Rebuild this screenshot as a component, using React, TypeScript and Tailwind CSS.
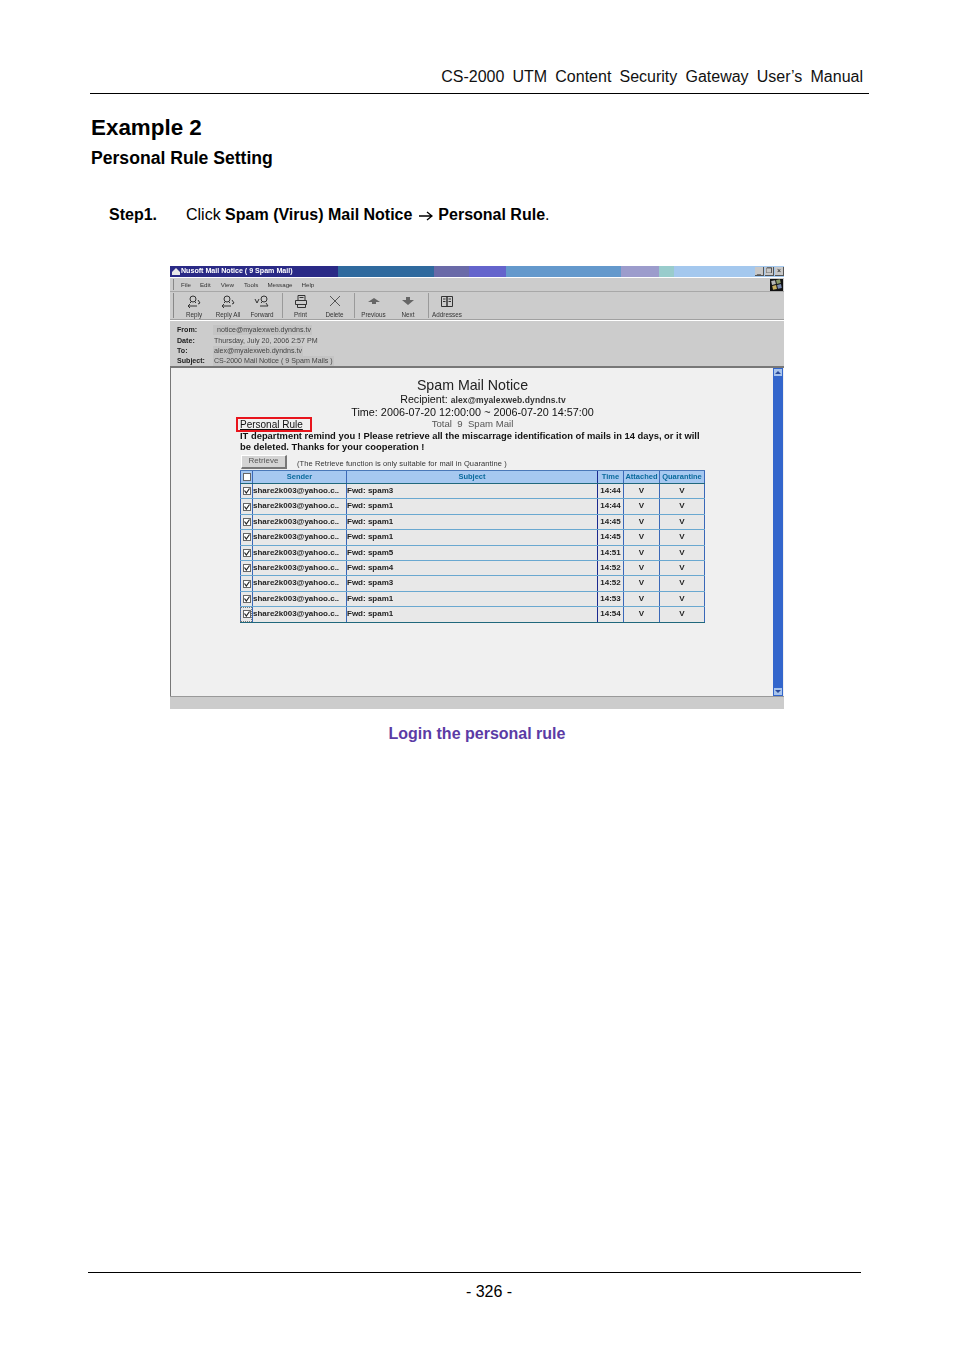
const titleSegments = [
  { w: 'w-[168px]', c: 'bg-[#2a2a86]' },
  { w: 'w-[96px]', c: 'bg-[#2f6a9e]' },
  { w: 'w-[35px]', c: 'bg-[#6a6aa8]' },
  { w: 'w-[37px]', c: 'bg-[#6464cc]' },
  { w: 'w-[115px]', c: 'bg-[#6499cc]' },
  { w: 'w-[38px]', c: 'bg-[#9c9ccc]' },
  { w: 'w-[15px]', c: 'bg-[#99cccc]' },
  { w: 'flex-1', c: 'bg-[#a4c8ee]' },
]

const menus = [
  { label: 'File', gap: 'mr-[9px]' },
  { label: 'Edit', gap: 'mr-[10px]' },
  { label: 'View', gap: 'mr-[10px]' },
  { label: 'Tools', gap: 'mr-[9px]' },
  { label: 'Message', gap: 'mr-[9px]' },
  { label: 'Help', gap: '' },
]

const rows = [
  ['spam3', '14:44'],
  ['spam1', '14:44'],
  ['spam1', '14:45'],
  ['spam1', '14:45'],
  ['spam5', '14:51'],
  ['spam4', '14:52'],
  ['spam3', '14:52'],
  ['spam1', '14:53'],
  ['spam1', '14:54'],
]

const headerFields = [
  ['From:', 'notice@myalexweb.dyndns.tv'],
  ['Date:', 'Thursday, July 20, 2006 2:57 PM'],
  ['To:', 'alex@myalexweb.dyndns.tv'],
  ['Subject:', 'CS-2000 Mail Notice ( 9 Spam Mails )'],
]

const gridCols = 'grid grid-cols-[12px_94px_251px_26px_36px_46px]'

function ToolIcon({ kind }: { kind: string }) {
  const s = { fill: 'none', stroke: '#333', strokeWidth: 1 }
  return (
    <svg width="16" height="13" viewBox="0 0 16 13" className="block">
      {kind === 'reply' && (
        <g {...s}>
          <circle cx="7" cy="4" r="3" />
          <path d="M5 7l-1 1M9 7l1 1M2 11h9M4 9l-2 2 2 2M12 5l2 3-2 1" />
        </g>
      )}
      {kind === 'forward' && (
        <g {...s}>
          <circle cx="10" cy="4" r="3" />
          <path d="M8 7l-1 1M6 11h8M1 4l2 4 2-4M12 8l2 3" />
        </g>
      )}
      {kind === 'print' && (
        <g {...s}>
          <path d="M5 0.5h7v5H5zM2.5 5.5h11v4h-11zM4.500 9.500h8v3h-8zM6.500 2.500h4" />
        </g>
      )}
      {kind === 'delete' && <path d="M3 1l10 10M13 1L3 11" fill="none" stroke="#555" strokeWidth={1} />}
      {kind === 'prev' && <path d="M8 3l6 4h-4v2H6V7H2z" fill="#666" />}
      {kind === 'next' && <path d="M6 2h4v3h4l-6 5-6-5h4z" fill="#666" />}
      {kind === 'book' && (
        <g {...s}>
          <path d="M2.500 1.500h5.500v10H2.500zM8 1.500h5.500v10H8zM4 4h2.500M4 6.500h2.500M9.500 4H12M9.500 6.500H12" />
        </g>
      )}
    </svg>
  )
}

function ToolButton({ label, kind, w }: { label: string; kind: string; w: string }) {
  return (
    <div className={`${w} flex flex-col items-center pt-[2px]`}>
      <div className="h-[14px] flex items-center">
        <ToolIcon kind={kind} />
      </div>
      <div className="mt-[3px] text-[6.3px] leading-[8px] text-[#333] whitespace-nowrap">{label}</div>
    </div>
  )
}

function ToolSep() {
  return <div className="w-px h-[25px] bg-[#9a9a9a] shrink-0" />
}

function CheckBox({ checked }: { checked?: boolean }) {
  return (
    <div className="w-[8px] h-[8px] border border-[#666] bg-white flex items-center justify-center">
      {checked && (
        <svg width="6" height="6" viewBox="0 0 6 6">
          <path d="M0.500 2.500l1.800 2.500 3.200-4.500" fill="none" stroke="#222" strokeWidth={1.2} />
        </svg>
      )}
    </div>
  )
}

function WinFlag() {
  return (
    <div className="w-[13px] h-[12px] bg-[#111] flex items-center justify-center mr-[1px]">
      <div className="grid grid-cols-2 gap-px -rotate-12">
        <div className="w-[4px] h-[4px] bg-[#b8b8b8]" />
        <div className="w-[4px] h-[4px] bg-[#8a9a6a]" />
        <div className="w-[4px] h-[4px] bg-[#c8b060]" />
        <div className="w-[4px] h-[4px] bg-[#7a8ab0]" />
      </div>
    </div>
  )
}

function MailWindow() {
  return (
    <div className="ml-[170px] w-[614px] h-[443px] bg-[#cccccc] flex flex-col blur-[0.3px]">
      {/* title bar */}
      <div className="h-[11px] flex relative shrink-0">
        {titleSegments.map((s, i) => (
          <div key={i} className={`${s.w} ${s.c}`} />
        ))}
        <div className="absolute left-[2px] top-0 h-[11px] flex items-center gap-[1px] text-white font-bold text-[7.1px] whitespace-nowrap">
          <svg width="8" height="7" viewBox="0 0 8 7">
            <path d="M0 4l4-4 4 4v3H0z" fill="#e8e8e8" />
          </svg>
          Nusoft Mail Notice ( 9 Spam Mail)
        </div>
        <div className="absolute right-0 top-[1px] flex gap-[1px]">
          {['_', '❐', '×'].map((c) => (
            <div key={c} className="w-[9px] h-[9px] bg-[#c8c8c8] border-r border-b border-[#555] text-[7px] leading-[8px] text-center text-[#111]">
              {c}
            </div>
          ))}
        </div>
      </div>
      <div className="h-px bg-white shrink-0" />
      {/* menu bar */}
      <div className="h-[14px] flex items-center justify-between border-b border-[#a8a8a8] shrink-0">
        <div className="flex items-center pl-[3px]">
          <div className="w-px h-[11px] bg-[#888] mr-[7px]" />
          {menus.map((m) => (
            <span key={m.label} className={`text-[6.2px] text-[#333] ${m.gap}`}>
              {m.label}
            </span>
          ))}
        </div>
        <WinFlag />
      </div>
      {/* toolbar */}
      <div className="h-[28px] flex items-center pl-[3px] border-b border-[#a0a0a0] shrink-0">
        <div className="w-px h-[25px] bg-[#888]" />
        <ToolButton label="Reply" kind="reply" w="w-[40px]" />
        <ToolButton label="Reply All" kind="reply" w="w-[28px]" />
        <ToolButton label="Forward" kind="forward" w="w-[40px]" />
        <ToolSep />
        <ToolButton label="Print" kind="print" w="w-[35px]" />
        <ToolButton label="Delete" kind="delete" w="w-[33px]" />
        <div className="w-[3px]" />
        <ToolSep />
        <ToolButton label="Previous" kind="prev" w="w-[37px]" />
        <ToolButton label="Next" kind="next" w="w-[32px]" />
        <div className="w-[4px]" />
        <ToolSep />
        <ToolButton label="Addresses" kind="book" w="w-[36px]" />
      </div>
      <div className="h-px bg-white shrink-0" />
      {/* mail header */}
      <div className="h-[46px] pt-[4px] pl-[7px] border-b border-[#777] shrink-0">
        {headerFields.map(([k, v], i) => (
          <div key={k} className="flex h-[10.4px] items-center text-[7.1px] leading-[10px]">
            <span className="w-[36px] font-bold text-[#222]">{k}</span>
            <span className={`text-[#444] px-[1px] ${i === 1 ? '' : 'bg-[#c4c4c4]'} ${i === 0 ? 'pl-[4px]' : ''}`}>{v}</span>
          </div>
        ))}
      </div>
      {/* mail body */}
      <div className="h-[329px] flex border-l border-t border-[#777] bg-[#f0f0f0] shrink-0">
        <div className="flex-1 pl-[69px] pt-[10px] text-black">
          <div className="w-[465px] flex flex-col items-center">
            <div className="text-[14.2px] leading-[15px] text-[#222]">Spam Mail Notice</div>
            <div className="text-[10.7px] leading-[13px] ml-[21px] text-[#111] flex items-baseline">
              Recipient:
              <span className="ml-[3px] font-bold text-[8.5px] tracking-[0.1px] text-[#333]">alex@myalexweb.dyndns.tv</span>
            </div>
            <div className="text-[10.8px] leading-[13px] mt-[-1px] text-[#111]">Time: 2006-07-20 12:00:00 ~ 2006-07-20 14:57:00</div>
          </div>
          <div className="w-[465px] h-[12px] mt-[-1px] relative flex justify-center">
            <div className="text-[9.6px] leading-[12px] text-[#555]">Total&nbsp; 9&nbsp; Spam Mail</div>
            <div className="absolute left-[-4px] top-[-1px] w-[76px] h-[15px] border-2 border-[#e8141c] text-[10px] leading-[11px] pl-[2px] text-[#111] underline whitespace-nowrap">
              Personal Rule
            </div>
          </div>
          <div className="w-[466px] text-[9.4px] leading-[11px] text-[#111] font-bold">
            IT department remind you ! Please retrieve all the miscarrage identification of mails in 14 days, or it will be deleted. Thanks for your cooperation !
          </div>
          <div className="flex items-center h-[14px] mt-[3px] pl-[1px]">
            <div className="w-[46px] h-[14px] bg-[#d4d4d4] border-r-2 border-b-2 border-[#777] border-t border-l border-t-white border-l-white text-[8px] leading-[10px] text-center text-[#555]">
              Retrieve
            </div>
            <div className="ml-[10px] mt-[3px] text-[7.5px] text-[#333] tracking-[0.1px] whitespace-nowrap">
              (The Retrieve function is only suitable for mail in Quarantine )
            </div>
          </div>
          {/* spam table */}
          <div className="w-[465px] mt-[1px] border-b border-[#20687c]">
            <div className={`${gridCols} h-[13px] bg-[#a6c8f0] border-t border-[#4a78b8] text-[#0a6a9c] font-bold text-[7.5px] leading-[12px] text-center`}>
              <div className="border-l border-[#3a68b8] flex items-center justify-center">
                <CheckBox />
              </div>
              <div className="border-l border-[#3a68b8]">Sender</div>
              <div className="border-l border-[#3a68b8]">Subject</div>
              <div className="border-l border-[#1a2a90]">Time</div>
              <div className="border-l border-[#3a68b8] whitespace-nowrap">Attached</div>
              <div className="border-l border-r border-[#3a68b8] whitespace-nowrap">Quarantine</div>
            </div>
            {rows.map(([subject, time], i) => (
              <div
                key={i}
                className={`${gridCols} h-[15.4px] bg-[#e8e8e8] border-t ${i === 0 ? 'border-[#20687c]' : 'border-[#6aa8d0]'} text-[8px] leading-[14px] text-[#222] font-bold`}
              >
                <div className={`border-l border-[#3a68b8] flex items-center justify-center ${i === 8 ? 'outline-1 outline-dotted outline-[#777] -outline-offset-1' : ''}`}>
                  <CheckBox checked />
                </div>
                <div className="border-l border-[#3a68b8] whitespace-nowrap">share2k003@yahoo.c..</div>
                <div className="border-l border-[#3a68b8]">Fwd: {subject}</div>
                <div className="border-l border-[#1a2a90] text-center">{time}</div>
                <div className="border-l border-[#3a68b8] text-center">V</div>
                <div className="border-l border-r border-[#3a68b8] text-center">V</div>
              </div>
            ))}
          </div>
        </div>
        {/* scrollbar */}
        <div className="w-[10px] flex flex-col justify-between bg-[#3366cc] mr-px">
          <div className="h-[9px] bg-[#a8c4ec] border border-[#3366cc] flex items-center justify-center">
            <div className="w-0 h-0 border-x-[3px] border-x-transparent border-b-[3px] border-b-[#2a4a9a]" />
          </div>
          <div className="h-[9px] bg-[#a8c4ec] border border-[#3366cc] flex items-center justify-center">
            <div className="w-0 h-0 border-x-[3px] border-x-transparent border-t-[3px] border-t-[#2a4a9a]" />
          </div>
        </div>
      </div>
      <div className="flex-1 border-t border-[#999]" />
    </div>
  )
}

export default function App() {
  return (
    <div className="w-[954px] h-[1350px] bg-white flex flex-col font-['Liberation_Sans',sans-serif] text-black">
      <div className="ml-[90px] w-[779px] h-[94px] border-b border-black flex items-end justify-end pr-[6px] pb-[4px] text-[16px] leading-[24px] [word-spacing:3.7px] text-[#111]">
        CS-2000 UTM Content Security Gateway User’s Manual
      </div>
      <h1 className="ml-[91px] mt-[20px] text-[22.4px] leading-[28px] font-bold">Example 2</h1>
      <h2 className="ml-[91px] mt-[5px] text-[17.6px] leading-[22px] font-bold">Personal Rule Setting</h2>
      <div className="ml-[109px] mt-[34px] h-[24px] flex items-center text-[16px] leading-[24px]">
        <span className="w-[77px] font-bold">Step1.</span>
        <span>
          Click <b>Spam (Virus) Mail Notice</b>{' '}
          <svg width="14" height="10" viewBox="0 0 14 10" className="inline-block ml-[2px] mr-px">
            <path d="M0 5h13M8 1l5 4-5 4" fill="none" stroke="#000" strokeWidth={1.3} />
          </svg>{' '}
          <b>Personal Rule</b>.
        </span>
      </div>
      <div className="mt-[39px]">
        <MailWindow />
      </div>
      <div className="mt-[14px] h-[22px] text-center text-[16px] leading-[22px] font-bold text-[#5b3ba5]">
        Login the personal rule
      </div>
      <div className="mt-[527px] ml-[88px] w-[773px] border-t border-black pt-[9px] pl-[29px] text-center text-[16px] leading-[20px]">
        - 326 -
      </div>
    </div>
  )
}
